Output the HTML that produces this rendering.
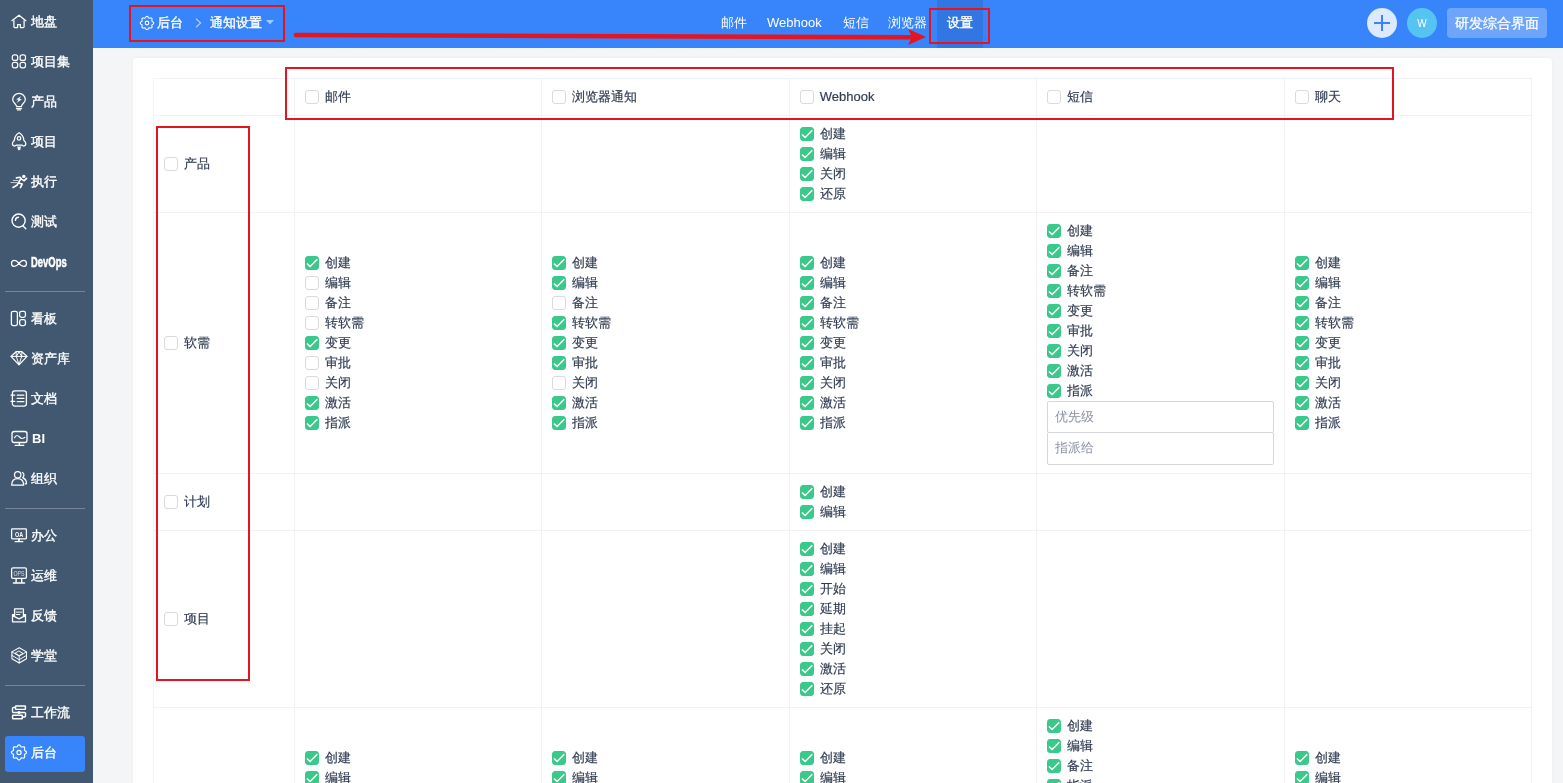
<!DOCTYPE html>
<html lang="zh"><head><meta charset="utf-8"><title>通知设置</title><style>
*{box-sizing:border-box;margin:0;padding:0}
html,body{width:1563px;height:783px;overflow:hidden;background:#f3f5f7;font-family:"Liberation Sans",sans-serif;font-size:13px;color:#313c52}
#side{will-change:transform;position:absolute;left:0;top:0;width:93px;height:783px;background:#425870}
.nv{position:absolute;left:5px;width:80px;height:36px;border-radius:3px;color:#fff;font-weight:700;font-size:13px;line-height:36px;white-space:nowrap}
.nv.act{background:#3784fb}
.nv .ic{position:absolute;left:3px;top:6px;width:22px;height:21px}
.nv .ic svg{display:block}
.nv .lb{position:absolute;left:26px;top:-1px;font-weight:400;-webkit-text-stroke:.35px #fff}
.nv.dev .lb{transform:scaleX(.63);transform-origin:0 50%;font-size:15px;font-weight:700;top:-1px;-webkit-text-stroke:.55px #fff;left:26px}
.dv{position:absolute;left:5px;width:80px;height:1px;background:rgba(255,255,255,.28)}
#head{will-change:transform;position:absolute;left:93px;top:0;width:1470px;height:48px;background:#3784fb;color:#fff}
#head .t{position:absolute;top:0;height:48px;line-height:45px;font-size:13px;white-space:nowrap}
#panel{will-change:transform;position:absolute;left:133px;top:58px;width:1419px;height:800px;background:#fff;border-radius:4px;box-shadow:0 0 4px rgba(0,0,0,.035),0 1px 2px rgba(0,0,0,.03)}
.tb{position:absolute;left:20px;top:20px;width:1379px;border-collapse:collapse;table-layout:fixed}
.tb td,.tb th{border:1px solid #f1f2f5;padding:8px 10px;vertical-align:middle;text-align:left;font-weight:400}
.ln{height:20px;line-height:20px;position:relative;padding-left:20px;white-space:nowrap;font-size:13px}
.ln span{position:relative;top:0;-webkit-text-stroke:.18px #313c52}
.cb{position:absolute;left:0;top:3px;width:14px;height:14px;border:1px solid #d9dadd;border-radius:3px;background:#fff}
.cb.on{background:#3ac98b;border-color:#3ac98b}
.cb svg{position:absolute;left:-1px;top:-1px;width:14px;height:14px}
.inp{height:32px;border:1px solid #d6d7da;border-radius:2px;line-height:30px;padding-left:7px;color:#8b91a2;width:227px;background:#fff;box-shadow:0 0 0 0 transparent}
.inp.i2{margin-top:-1px;height:33px}
.rb{position:absolute;border:2px solid #e51421}

.nv.bi .lb{left:27px;font-weight:700;-webkit-text-stroke:0;font-size:13px}
.md{font-weight:400;-webkit-text-stroke:.35px #fff}

</style></head>
<body>
<div id="side"><div class="nv" style="top:5px"><span class="ic"><svg width="22" height="21" viewBox="0 0 22 21"><path fill="none" stroke="#fff" stroke-width="1.25" stroke-linecap="round" stroke-linejoin="round"  d="M3.9 9.7 L11 4.2 L17.9 9.7"/><path fill="none" stroke="#fff" stroke-width="1.25" stroke-linecap="round" stroke-linejoin="round"  d="M5.9 9.6 V15.6 Q5.9 16.5 6.8 16.5 H9.6 V13.6 H12.4 V16.5 H15.2 Q16.1 16.5 16.1 15.6 V9.6"/></svg></span><span class="lb">地盘</span></div><div class="nv" style="top:45px"><span class="ic"><svg width="22" height="21" viewBox="0 0 22 21"><g fill="none" stroke="#fff" stroke-width="1.2" stroke-linecap="round" stroke-linejoin="round" ><rect x="4.3" y="3.9" width="5.4" height="5.5" rx="2"/><rect x="12.1" y="3.9" width="5.4" height="5.5" rx="2"/><rect x="4.3" y="11.3" width="5.4" height="5.5" rx="2"/><rect x="12.1" y="11.3" width="5.4" height="5.5" rx="2"/></g></svg></span><span class="lb">项目集</span></div><div class="nv" style="top:85px"><span class="ic"><svg width="22" height="21" viewBox="0 0 22 21"><path fill="none" stroke="#fff" stroke-width="1.25" stroke-linecap="round" stroke-linejoin="round"  d="M8.6 15.5 C8.2 12.6 4.7 11.6 4.7 8.7 A6.3 6.3 0 0 1 17.3 8.7 C17.3 11.6 13.8 12.6 13.4 15.5 Z"/><path fill="none" stroke="#fff" stroke-width="1.2" stroke-linecap="round" stroke-linejoin="round"  d="M8.4 17.6 H13.6 M9.5 19 H12.5"/><path fill="#fff" d="M13.1 5.2 L8.1 8.6 L10.6 8.8 L8.5 11.9 L13.9 8.2 L11.4 8.05 Z"/></svg></span><span class="lb">产品</span></div><div class="nv" style="top:125px"><span class="ic"><svg width="22" height="21" viewBox="0 0 22 21"><path fill="none" stroke="#fff" stroke-width="1.25" stroke-linecap="round" stroke-linejoin="round"  d="M11.1 1.7 C8.2 3.4 6.5 6 6.4 9.2 C5 10.4 4.4 11.6 4.4 12.6 C4.4 14.2 5.4 15 6.4 15 C7.2 15 7.6 14.4 8.4 14.1 H13.8 C14.6 14.4 15 15 15.8 15 C16.8 15 17.8 14.2 17.8 12.6 C17.8 11.6 17.2 10.4 15.8 9.2 C15.7 6 14 3.4 11.1 1.7 Z"/><circle fill="none" stroke="#fff" stroke-width="1.3" stroke-linecap="round" stroke-linejoin="round"  cx="11.05" cy="7.4" r="1.75"/><path fill="#fff" fill-opacity=".92" d="M9.1 15.4 H13.1 L12.4 18.2 L11.1 19.5 L9.8 18.2 Z"/></svg></span><span class="lb">项目</span></div><div class="nv" style="top:165px"><span class="ic"><svg width="22" height="21" viewBox="0 0 22 21"><circle cx="15.8" cy="5.4" r="1.7" fill="#fff"/><path fill="none" stroke="#fff" stroke-width="1.6" stroke-linecap="round" stroke-linejoin="round"  d="M8.4 6.9 L12 6.3 L13.5 8.1 L16.2 9.7 L18.6 7.4 M13.1 7.4 L10.4 11.9 L14.2 13.1 L12.4 16.6 M10.4 11.9 L8.9 14.2 L5 16.5"/><path fill="none" stroke="#fff" stroke-width="0.9" stroke-linecap="round" stroke-linejoin="round" stroke-opacity="0.8" d="M5.3 9.4 L10 9.6 M3 11.5 L9.2 11.7"/></svg></span><span class="lb">执行</span></div><div class="nv" style="top:205px"><span class="ic"><svg width="22" height="21" viewBox="0 0 22 21"><circle fill="none" stroke="#fff" stroke-width="1.4" stroke-linecap="round" stroke-linejoin="round"  cx="10.6" cy="9.6" r="6.6"/><path fill="none" stroke="#fff" stroke-width="1.4" stroke-linecap="round" stroke-linejoin="round"  d="M15.1 15 L17.8 17.8"/><path fill="none" stroke="#fff" stroke-width="1.4" stroke-linecap="round" stroke-linejoin="round"  d="M7.4 9.4 A3.3 3.3 0 0 1 10.5 6.2"/></svg></span><span class="lb">测试</span></div><div class="nv dev" style="top:245px"><span class="ic"><svg width="22" height="21" viewBox="0 0 22 21"><path fill="none" stroke="#fff" stroke-width="1.25" stroke-linecap="round" stroke-linejoin="round"  d="M11 12.4 C9.4 10.4 8.2 9.4 6.5 9.4 A3 3 0 0 0 6.5 15.4 C8.2 15.4 9.4 14.4 11 12.4 C12.6 10.4 13.8 9.4 15.5 9.4 A3 3 0 0 1 15.5 15.4 C13.8 15.4 12.6 14.4 11 12.4 Z"/></svg></span><span class="lb">DevOps</span></div><div class="nv" style="top:302px"><span class="ic"><svg width="22" height="21" viewBox="0 0 22 21"><g fill="none" stroke="#fff" stroke-width="1.3" stroke-linecap="round" stroke-linejoin="round" ><rect x="3.4" y="3.3" width="6" height="14.3" rx="1.8"/><rect x="11.65" y="3.3" width="5.8" height="6" rx="1.8"/><rect x="11.65" y="11.6" width="5.8" height="6" rx="1.8"/></g></svg></span><span class="lb">看板</span></div><div class="nv" style="top:342px"><span class="ic"><svg width="22" height="21" viewBox="0 0 22 21"><path fill="none" stroke="#fff" stroke-width="1.25" stroke-linecap="round" stroke-linejoin="round"  d="M8.1 3.7 H13.9 L19 8.4 L11 16.9 L3 8.4 Z"/><path fill="none" stroke="#fff" stroke-width="1.0" stroke-linecap="round" stroke-linejoin="round"  d="M3.2 8.4 H18.8 M8.1 3.8 L8.3 8.4 L11 16.6 L13.7 8.4 L13.9 3.8 M8.3 8.4 L11 4 L13.7 8.4"/></svg></span><span class="lb">资产库</span></div><div class="nv" style="top:382px"><span class="ic"><svg width="22" height="21" viewBox="0 0 22 21"><rect fill="none" stroke="#fff" stroke-width="1.3" stroke-linecap="round" stroke-linejoin="round"  x="4.4" y="2.8" width="14" height="15.3" rx="2.4"/><path fill="none" stroke="#fff" stroke-width="1.2" stroke-linecap="round" stroke-linejoin="round"  d="M3 7.1 H6.8 M3 13.4 H6.8 M9.2 7.1 H15.9 M9.2 10.4 H15.9 M9.2 13.7 H15.9"/></svg></span><span class="lb">文档</span></div><div class="nv bi" style="top:422px"><span class="ic"><svg width="22" height="21" viewBox="0 0 22 21"><rect fill="none" stroke="#fff" stroke-width="1.3" stroke-linecap="round" stroke-linejoin="round"  x="4" y="3.5" width="15" height="11" rx="2.2"/><path fill="none" stroke="#fff" stroke-width="1.2" stroke-linecap="round" stroke-linejoin="round"  d="M6.5 9.7 C7.4 8 8.4 7.5 9.2 7.5 C11 7.5 12 10.5 13.9 10.5 C15 10.5 15.8 10 16.8 9.4"/><path fill="none" stroke="#fff" stroke-width="1.3" stroke-linecap="round" stroke-linejoin="round"  d="M11.4 14.6 V17 M7.2 17.3 H15.8"/></svg></span><span class="lb">BI</span></div><div class="nv" style="top:462px"><span class="ic"><svg width="22" height="21" viewBox="0 0 22 21"><circle fill="none" stroke="#fff" stroke-width="1.25" stroke-linecap="round" stroke-linejoin="round"  cx="9.7" cy="6.7" r="3.2"/><path fill="none" stroke="#fff" stroke-width="1.25" stroke-linecap="round" stroke-linejoin="round"  d="M3.7 17.2 C3.7 13.2 6 10.6 9.7 10.6 C13.4 10.6 15.6 13.2 15.6 17.2 Z"/><path fill="none" stroke="#fff" stroke-width="1.25" stroke-linecap="round" stroke-linejoin="round"  d="M14.5 4.5 A3 3 0 0 1 14.8 9.4 M15 9.9 C17.4 11 18.6 13 18.4 15.8 H17"/></svg></span><span class="lb">组织</span></div><div class="nv" style="top:519px"><span class="ic"><svg width="22" height="21" viewBox="0 0 22 21"><rect fill="none" stroke="#fff" stroke-width="1.3" stroke-linecap="round" stroke-linejoin="round"  x="3.6" y="3.9" width="14.8" height="10" rx="0.8"/><path fill="none" stroke="#fff" stroke-width="1.8" stroke-linecap="round" stroke-linejoin="round"  d="M11 14.4 V16.2"/><path fill="none" stroke="#fff" stroke-width="1.3" stroke-linecap="round" stroke-linejoin="round"  d="M7.2 16.7 H14.8"/><text x="11" y="11.9" font-family="Liberation Sans, sans-serif" font-size="7.4" font-weight="700" fill="#fff" text-anchor="middle" textLength="8.2" lengthAdjust="spacingAndGlyphs">OA</text></svg></span><span class="lb">办公</span></div><div class="nv" style="top:559px"><span class="ic"><svg width="22" height="21" viewBox="0 0 22 21"><rect fill="none" stroke="#fff" stroke-width="1.3" stroke-linecap="round" stroke-linejoin="round"  x="3.6" y="2.8" width="14.8" height="10.6" rx="1.4"/><path fill="none" stroke="#fff" stroke-width="1.4" stroke-linecap="round" stroke-linejoin="round"  d="M8.1 14 V17.6 M13.7 14 V17.6 M5.4 18 H16.6"/><text x="10.9" y="10.9" font-family="Liberation Sans, sans-serif" font-size="7" font-weight="400" fill="#fff" fill-opacity=".8" text-anchor="middle" textLength="11" lengthAdjust="spacingAndGlyphs">OPS</text></svg></span><span class="lb">运维</span></div><div class="nv" style="top:599px"><span class="ic"><svg width="22" height="21" viewBox="0 0 22 21"><path fill="none" stroke="#fff" stroke-width="1.3" stroke-linecap="round" stroke-linejoin="round"  d="M6.6 10.6 V3.9 H15.4 V10.6 M6.4 9.6 H4.5 V16.8 H17.5 V9.6 H15.6 M4.7 10.7 L11 13.9 L17.3 10.7"/><path fill="none" stroke="#fff" stroke-width="1.4" stroke-linecap="round" stroke-linejoin="round" stroke-opacity="0.8" d="M8.3 7.1 H13.7"/><path fill="none" stroke="#fff" stroke-width="1.1" stroke-linecap="round" stroke-linejoin="round"  d="M8.3 9.5 H11.8"/></svg></span><span class="lb">反馈</span></div><div class="nv" style="top:639px"><span class="ic"><svg width="22" height="21" viewBox="0 0 22 21"><path fill="none" stroke="#fff" stroke-width="1.05" stroke-linecap="round" stroke-linejoin="round"  d="M11.2 2.7 L18.5 6.9 V13.8 L11.2 18 L3.9 13.8 V6.9 Z"/><path fill="none" stroke="#fff" stroke-width="0.95" stroke-linecap="round" stroke-linejoin="round"  d="M3.9 6.9 L11.2 11.1 L18.5 6.9 M11.2 11.1 V18 M11.2 6.1 L15 8.4 L11.2 10.6 L7.4 8.4 Z M3.9 10.4 L11.2 14.7 L18.5 10.4"/></svg></span><span class="lb">学堂</span></div><div class="nv" style="top:696px"><span class="ic"><svg width="22" height="21" viewBox="0 0 22 21"><g fill="none" stroke="#fff" stroke-width="1.45" stroke-linecap="round" stroke-linejoin="round" ><rect x="7.5" y="3.95" width="9.9" height="3.4" rx="0.5"/><rect x="4.6" y="13.2" width="9.7" height="3.55" rx="0.5"/><path d="M7.4 5.4 H5.4 Q4.5 5.4 4.5 6.3 V9.5 Q4.5 10.4 5.4 10.4 H16.6 Q17.5 10.4 17.5 11.3 V14 Q17.5 14.9 16.6 14.9 H14.6"/></g><circle cx="11" cy="10.4" r="1.5" fill="#fff"/></svg></span><span class="lb">工作流</span></div><div class="nv act" style="top:736px"><span class="ic"><svg width="22" height="21" viewBox="0 0 22 21"><path fill="none" stroke="#fff" stroke-width="1.2" stroke-linecap="round" stroke-linejoin="round"  d="M11.00 2.85 L11.49 2.97 L11.93 3.31 L12.32 3.78 L12.64 4.27 L12.95 4.66 L13.28 4.90 L13.68 4.97 L14.17 4.90 L14.75 4.79 L15.35 4.73 L15.91 4.80 L16.34 5.06 L16.60 5.49 L16.67 6.05 L16.61 6.65 L16.50 7.22 L16.43 7.72 L16.50 8.12 L16.74 8.45 L17.13 8.76 L17.62 9.08 L18.09 9.47 L18.43 9.91 L18.55 10.40 L18.43 10.89 L18.09 11.33 L17.62 11.72 L17.13 12.04 L16.74 12.35 L16.50 12.68 L16.43 13.08 L16.50 13.57 L16.61 14.15 L16.67 14.75 L16.60 15.31 L16.34 15.74 L15.91 16.00 L15.35 16.07 L14.75 16.01 L14.17 15.90 L13.68 15.83 L13.28 15.90 L12.95 16.14 L12.64 16.53 L12.32 17.02 L11.93 17.49 L11.49 17.83 L11.00 17.95 L10.51 17.83 L10.07 17.49 L9.68 17.02 L9.36 16.53 L9.05 16.14 L8.72 15.90 L8.32 15.83 L7.83 15.90 L7.25 16.01 L6.65 16.07 L6.09 16.00 L5.66 15.74 L5.40 15.31 L5.33 14.75 L5.39 14.15 L5.50 13.58 L5.57 13.08 L5.50 12.68 L5.26 12.35 L4.87 12.04 L4.38 11.72 L3.91 11.33 L3.57 10.89 L3.45 10.40 L3.57 9.91 L3.91 9.47 L4.38 9.08 L4.87 8.76 L5.26 8.45 L5.50 8.12 L5.57 7.72 L5.50 7.22 L5.39 6.65 L5.33 6.05 L5.40 5.49 L5.66 5.06 L6.09 4.80 L6.65 4.73 L7.25 4.79 L7.82 4.90 L8.32 4.97 L8.72 4.90 L9.05 4.66 L9.36 4.27 L9.68 3.78 L10.07 3.31 L10.51 2.97 Z"/><circle fill="none" stroke="#fff" stroke-width="1.2" stroke-linecap="round" stroke-linejoin="round"  cx="11" cy="10.4" r="2.1"/></svg></span><span class="lb">后台</span></div><div class="dv" style="top:291px"></div><div class="dv" style="top:508px"></div><div class="dv" style="top:685px"></div></div>
<div id="head">
  <span style="position:absolute;left:46px;top:15px;line-height:0"><svg width="16" height="16" viewBox="2 1.4 18 18"><path fill="none" stroke="#fff" stroke-width="1.2" stroke-linecap="round" stroke-linejoin="round"  d="M11.00 2.85 L11.49 2.97 L11.93 3.31 L12.32 3.78 L12.64 4.27 L12.95 4.66 L13.28 4.90 L13.68 4.97 L14.17 4.90 L14.75 4.79 L15.35 4.73 L15.91 4.80 L16.34 5.06 L16.60 5.49 L16.67 6.05 L16.61 6.65 L16.50 7.22 L16.43 7.72 L16.50 8.12 L16.74 8.45 L17.13 8.76 L17.62 9.08 L18.09 9.47 L18.43 9.91 L18.55 10.40 L18.43 10.89 L18.09 11.33 L17.62 11.72 L17.13 12.04 L16.74 12.35 L16.50 12.68 L16.43 13.08 L16.50 13.57 L16.61 14.15 L16.67 14.75 L16.60 15.31 L16.34 15.74 L15.91 16.00 L15.35 16.07 L14.75 16.01 L14.17 15.90 L13.68 15.83 L13.28 15.90 L12.95 16.14 L12.64 16.53 L12.32 17.02 L11.93 17.49 L11.49 17.83 L11.00 17.95 L10.51 17.83 L10.07 17.49 L9.68 17.02 L9.36 16.53 L9.05 16.14 L8.72 15.90 L8.32 15.83 L7.83 15.90 L7.25 16.01 L6.65 16.07 L6.09 16.00 L5.66 15.74 L5.40 15.31 L5.33 14.75 L5.39 14.15 L5.50 13.58 L5.57 13.08 L5.50 12.68 L5.26 12.35 L4.87 12.04 L4.38 11.72 L3.91 11.33 L3.57 10.89 L3.45 10.40 L3.57 9.91 L3.91 9.47 L4.38 9.08 L4.87 8.76 L5.26 8.45 L5.50 8.12 L5.57 7.72 L5.50 7.22 L5.39 6.65 L5.33 6.05 L5.40 5.49 L5.66 5.06 L6.09 4.80 L6.65 4.73 L7.25 4.79 L7.82 4.90 L8.32 4.97 L8.72 4.90 L9.05 4.66 L9.36 4.27 L9.68 3.78 L10.07 3.31 L10.51 2.97 Z"/><circle fill="none" stroke="#fff" stroke-width="1.2" stroke-linecap="round" stroke-linejoin="round"  cx="11" cy="10.4" r="2.1"/></svg></span>
  <span class="t md" style="left:64px">后台</span>
  <svg style="position:absolute;left:102px;top:18px" width="7" height="10" viewBox="0 0 7 10"><path d="M1 0.8 L5.6 5 L1 9.2" fill="none" stroke="#fff" stroke-opacity=".6" stroke-width="1.2"/></svg>
  <span class="t md" style="left:117px">通知设置</span>
  <svg style="position:absolute;left:173px;top:20px" width="8" height="5" viewBox="0 0 8 5"><path d="M0 0 H8 L4 4.6 Z" fill="#fff" fill-opacity=".55"/></svg>
  <div style="position:absolute;left:844px;top:0;width:46px;height:48px;background:#3276e3"></div>
  <span class="t" style="left:628px">邮件</span>
  <span class="t" style="left:674px">Webhook</span>
  <span class="t" style="left:750px">短信</span>
  <span class="t" style="left:795px">浏览器</span>
  <span class="t md" style="left:854px">设置</span>
  <div style="position:absolute;left:1274px;top:8px;width:30px;height:30px;border-radius:15px;background:#dce9fe">
    <svg width="30" height="30" viewBox="0 0 30 30"><path d="M15 7 V23 M7 15 H23" stroke="#3784fb" stroke-width="2" fill="none"/></svg>
  </div>
  <div style="position:absolute;left:1314px;top:8px;width:30px;height:30px;border-radius:15px;background:#56c4f1;text-align:center;line-height:31px;font-size:10px;color:#fff">W</div>
  <div style="position:absolute;left:1354px;top:8px;width:100px;height:30px;border-radius:4px;background:rgba(255,255,255,.27);text-align:center;line-height:31px;font-size:14px;color:#fff;-webkit-text-stroke:.25px #fff">研发综合界面</div>
</div>
<div id="panel"><table class="tb"><colgroup><col style="width:141px"><col><col><col><col><col></colgroup><tr class="hd"><th></th><th><div class="ln"><i class="cb"></i><span>邮件</span></div></th><th><div class="ln"><i class="cb"></i><span>浏览器通知</span></div></th><th><div class="ln"><i class="cb"></i><span>Webhook</span></div></th><th><div class="ln"><i class="cb"></i><span>短信</span></div></th><th><div class="ln"><i class="cb"></i><span>聊天</span></div></th></tr><tr><td><div class="ln"><i class="cb"></i><span>产品</span></div></td><td></td><td></td><td><div class="ln"><i class="cb on"><svg viewBox="0 0 14 14"><path d="M1.9 7.5 L5.1 10.4 L12.3 3.3" fill="none" stroke="#fff" stroke-width="1.45"/></svg></i><span>创建</span></div><div class="ln"><i class="cb on"><svg viewBox="0 0 14 14"><path d="M1.9 7.5 L5.1 10.4 L12.3 3.3" fill="none" stroke="#fff" stroke-width="1.45"/></svg></i><span>编辑</span></div><div class="ln"><i class="cb on"><svg viewBox="0 0 14 14"><path d="M1.9 7.5 L5.1 10.4 L12.3 3.3" fill="none" stroke="#fff" stroke-width="1.45"/></svg></i><span>关闭</span></div><div class="ln"><i class="cb on"><svg viewBox="0 0 14 14"><path d="M1.9 7.5 L5.1 10.4 L12.3 3.3" fill="none" stroke="#fff" stroke-width="1.45"/></svg></i><span>还原</span></div></td><td></td><td></td></tr><tr><td><div class="ln"><i class="cb"></i><span>软需</span></div></td><td><div class="ln"><i class="cb on"><svg viewBox="0 0 14 14"><path d="M1.9 7.5 L5.1 10.4 L12.3 3.3" fill="none" stroke="#fff" stroke-width="1.45"/></svg></i><span>创建</span></div><div class="ln"><i class="cb"></i><span>编辑</span></div><div class="ln"><i class="cb"></i><span>备注</span></div><div class="ln"><i class="cb"></i><span>转软需</span></div><div class="ln"><i class="cb on"><svg viewBox="0 0 14 14"><path d="M1.9 7.5 L5.1 10.4 L12.3 3.3" fill="none" stroke="#fff" stroke-width="1.45"/></svg></i><span>变更</span></div><div class="ln"><i class="cb"></i><span>审批</span></div><div class="ln"><i class="cb"></i><span>关闭</span></div><div class="ln"><i class="cb on"><svg viewBox="0 0 14 14"><path d="M1.9 7.5 L5.1 10.4 L12.3 3.3" fill="none" stroke="#fff" stroke-width="1.45"/></svg></i><span>激活</span></div><div class="ln"><i class="cb on"><svg viewBox="0 0 14 14"><path d="M1.9 7.5 L5.1 10.4 L12.3 3.3" fill="none" stroke="#fff" stroke-width="1.45"/></svg></i><span>指派</span></div></td><td><div class="ln"><i class="cb on"><svg viewBox="0 0 14 14"><path d="M1.9 7.5 L5.1 10.4 L12.3 3.3" fill="none" stroke="#fff" stroke-width="1.45"/></svg></i><span>创建</span></div><div class="ln"><i class="cb on"><svg viewBox="0 0 14 14"><path d="M1.9 7.5 L5.1 10.4 L12.3 3.3" fill="none" stroke="#fff" stroke-width="1.45"/></svg></i><span>编辑</span></div><div class="ln"><i class="cb"></i><span>备注</span></div><div class="ln"><i class="cb on"><svg viewBox="0 0 14 14"><path d="M1.9 7.5 L5.1 10.4 L12.3 3.3" fill="none" stroke="#fff" stroke-width="1.45"/></svg></i><span>转软需</span></div><div class="ln"><i class="cb on"><svg viewBox="0 0 14 14"><path d="M1.9 7.5 L5.1 10.4 L12.3 3.3" fill="none" stroke="#fff" stroke-width="1.45"/></svg></i><span>变更</span></div><div class="ln"><i class="cb on"><svg viewBox="0 0 14 14"><path d="M1.9 7.5 L5.1 10.4 L12.3 3.3" fill="none" stroke="#fff" stroke-width="1.45"/></svg></i><span>审批</span></div><div class="ln"><i class="cb"></i><span>关闭</span></div><div class="ln"><i class="cb on"><svg viewBox="0 0 14 14"><path d="M1.9 7.5 L5.1 10.4 L12.3 3.3" fill="none" stroke="#fff" stroke-width="1.45"/></svg></i><span>激活</span></div><div class="ln"><i class="cb on"><svg viewBox="0 0 14 14"><path d="M1.9 7.5 L5.1 10.4 L12.3 3.3" fill="none" stroke="#fff" stroke-width="1.45"/></svg></i><span>指派</span></div></td><td><div class="ln"><i class="cb on"><svg viewBox="0 0 14 14"><path d="M1.9 7.5 L5.1 10.4 L12.3 3.3" fill="none" stroke="#fff" stroke-width="1.45"/></svg></i><span>创建</span></div><div class="ln"><i class="cb on"><svg viewBox="0 0 14 14"><path d="M1.9 7.5 L5.1 10.4 L12.3 3.3" fill="none" stroke="#fff" stroke-width="1.45"/></svg></i><span>编辑</span></div><div class="ln"><i class="cb on"><svg viewBox="0 0 14 14"><path d="M1.9 7.5 L5.1 10.4 L12.3 3.3" fill="none" stroke="#fff" stroke-width="1.45"/></svg></i><span>备注</span></div><div class="ln"><i class="cb on"><svg viewBox="0 0 14 14"><path d="M1.9 7.5 L5.1 10.4 L12.3 3.3" fill="none" stroke="#fff" stroke-width="1.45"/></svg></i><span>转软需</span></div><div class="ln"><i class="cb on"><svg viewBox="0 0 14 14"><path d="M1.9 7.5 L5.1 10.4 L12.3 3.3" fill="none" stroke="#fff" stroke-width="1.45"/></svg></i><span>变更</span></div><div class="ln"><i class="cb on"><svg viewBox="0 0 14 14"><path d="M1.9 7.5 L5.1 10.4 L12.3 3.3" fill="none" stroke="#fff" stroke-width="1.45"/></svg></i><span>审批</span></div><div class="ln"><i class="cb on"><svg viewBox="0 0 14 14"><path d="M1.9 7.5 L5.1 10.4 L12.3 3.3" fill="none" stroke="#fff" stroke-width="1.45"/></svg></i><span>关闭</span></div><div class="ln"><i class="cb on"><svg viewBox="0 0 14 14"><path d="M1.9 7.5 L5.1 10.4 L12.3 3.3" fill="none" stroke="#fff" stroke-width="1.45"/></svg></i><span>激活</span></div><div class="ln"><i class="cb on"><svg viewBox="0 0 14 14"><path d="M1.9 7.5 L5.1 10.4 L12.3 3.3" fill="none" stroke="#fff" stroke-width="1.45"/></svg></i><span>指派</span></div></td><td><div class="ln"><i class="cb on"><svg viewBox="0 0 14 14"><path d="M1.9 7.5 L5.1 10.4 L12.3 3.3" fill="none" stroke="#fff" stroke-width="1.45"/></svg></i><span>创建</span></div><div class="ln"><i class="cb on"><svg viewBox="0 0 14 14"><path d="M1.9 7.5 L5.1 10.4 L12.3 3.3" fill="none" stroke="#fff" stroke-width="1.45"/></svg></i><span>编辑</span></div><div class="ln"><i class="cb on"><svg viewBox="0 0 14 14"><path d="M1.9 7.5 L5.1 10.4 L12.3 3.3" fill="none" stroke="#fff" stroke-width="1.45"/></svg></i><span>备注</span></div><div class="ln"><i class="cb on"><svg viewBox="0 0 14 14"><path d="M1.9 7.5 L5.1 10.4 L12.3 3.3" fill="none" stroke="#fff" stroke-width="1.45"/></svg></i><span>转软需</span></div><div class="ln"><i class="cb on"><svg viewBox="0 0 14 14"><path d="M1.9 7.5 L5.1 10.4 L12.3 3.3" fill="none" stroke="#fff" stroke-width="1.45"/></svg></i><span>变更</span></div><div class="ln"><i class="cb on"><svg viewBox="0 0 14 14"><path d="M1.9 7.5 L5.1 10.4 L12.3 3.3" fill="none" stroke="#fff" stroke-width="1.45"/></svg></i><span>审批</span></div><div class="ln"><i class="cb on"><svg viewBox="0 0 14 14"><path d="M1.9 7.5 L5.1 10.4 L12.3 3.3" fill="none" stroke="#fff" stroke-width="1.45"/></svg></i><span>关闭</span></div><div class="ln"><i class="cb on"><svg viewBox="0 0 14 14"><path d="M1.9 7.5 L5.1 10.4 L12.3 3.3" fill="none" stroke="#fff" stroke-width="1.45"/></svg></i><span>激活</span></div><div class="ln"><i class="cb on"><svg viewBox="0 0 14 14"><path d="M1.9 7.5 L5.1 10.4 L12.3 3.3" fill="none" stroke="#fff" stroke-width="1.45"/></svg></i><span>指派</span></div><div class="inp">优先级</div><div class="inp i2">指派给</div></td><td><div class="ln"><i class="cb on"><svg viewBox="0 0 14 14"><path d="M1.9 7.5 L5.1 10.4 L12.3 3.3" fill="none" stroke="#fff" stroke-width="1.45"/></svg></i><span>创建</span></div><div class="ln"><i class="cb on"><svg viewBox="0 0 14 14"><path d="M1.9 7.5 L5.1 10.4 L12.3 3.3" fill="none" stroke="#fff" stroke-width="1.45"/></svg></i><span>编辑</span></div><div class="ln"><i class="cb on"><svg viewBox="0 0 14 14"><path d="M1.9 7.5 L5.1 10.4 L12.3 3.3" fill="none" stroke="#fff" stroke-width="1.45"/></svg></i><span>备注</span></div><div class="ln"><i class="cb on"><svg viewBox="0 0 14 14"><path d="M1.9 7.5 L5.1 10.4 L12.3 3.3" fill="none" stroke="#fff" stroke-width="1.45"/></svg></i><span>转软需</span></div><div class="ln"><i class="cb on"><svg viewBox="0 0 14 14"><path d="M1.9 7.5 L5.1 10.4 L12.3 3.3" fill="none" stroke="#fff" stroke-width="1.45"/></svg></i><span>变更</span></div><div class="ln"><i class="cb on"><svg viewBox="0 0 14 14"><path d="M1.9 7.5 L5.1 10.4 L12.3 3.3" fill="none" stroke="#fff" stroke-width="1.45"/></svg></i><span>审批</span></div><div class="ln"><i class="cb on"><svg viewBox="0 0 14 14"><path d="M1.9 7.5 L5.1 10.4 L12.3 3.3" fill="none" stroke="#fff" stroke-width="1.45"/></svg></i><span>关闭</span></div><div class="ln"><i class="cb on"><svg viewBox="0 0 14 14"><path d="M1.9 7.5 L5.1 10.4 L12.3 3.3" fill="none" stroke="#fff" stroke-width="1.45"/></svg></i><span>激活</span></div><div class="ln"><i class="cb on"><svg viewBox="0 0 14 14"><path d="M1.9 7.5 L5.1 10.4 L12.3 3.3" fill="none" stroke="#fff" stroke-width="1.45"/></svg></i><span>指派</span></div></td></tr><tr><td><div class="ln"><i class="cb"></i><span>计划</span></div></td><td></td><td></td><td><div class="ln"><i class="cb on"><svg viewBox="0 0 14 14"><path d="M1.9 7.5 L5.1 10.4 L12.3 3.3" fill="none" stroke="#fff" stroke-width="1.45"/></svg></i><span>创建</span></div><div class="ln"><i class="cb on"><svg viewBox="0 0 14 14"><path d="M1.9 7.5 L5.1 10.4 L12.3 3.3" fill="none" stroke="#fff" stroke-width="1.45"/></svg></i><span>编辑</span></div></td><td></td><td></td></tr><tr><td><div class="ln"><i class="cb"></i><span>项目</span></div></td><td></td><td></td><td><div class="ln"><i class="cb on"><svg viewBox="0 0 14 14"><path d="M1.9 7.5 L5.1 10.4 L12.3 3.3" fill="none" stroke="#fff" stroke-width="1.45"/></svg></i><span>创建</span></div><div class="ln"><i class="cb on"><svg viewBox="0 0 14 14"><path d="M1.9 7.5 L5.1 10.4 L12.3 3.3" fill="none" stroke="#fff" stroke-width="1.45"/></svg></i><span>编辑</span></div><div class="ln"><i class="cb on"><svg viewBox="0 0 14 14"><path d="M1.9 7.5 L5.1 10.4 L12.3 3.3" fill="none" stroke="#fff" stroke-width="1.45"/></svg></i><span>开始</span></div><div class="ln"><i class="cb on"><svg viewBox="0 0 14 14"><path d="M1.9 7.5 L5.1 10.4 L12.3 3.3" fill="none" stroke="#fff" stroke-width="1.45"/></svg></i><span>延期</span></div><div class="ln"><i class="cb on"><svg viewBox="0 0 14 14"><path d="M1.9 7.5 L5.1 10.4 L12.3 3.3" fill="none" stroke="#fff" stroke-width="1.45"/></svg></i><span>挂起</span></div><div class="ln"><i class="cb on"><svg viewBox="0 0 14 14"><path d="M1.9 7.5 L5.1 10.4 L12.3 3.3" fill="none" stroke="#fff" stroke-width="1.45"/></svg></i><span>关闭</span></div><div class="ln"><i class="cb on"><svg viewBox="0 0 14 14"><path d="M1.9 7.5 L5.1 10.4 L12.3 3.3" fill="none" stroke="#fff" stroke-width="1.45"/></svg></i><span>激活</span></div><div class="ln"><i class="cb on"><svg viewBox="0 0 14 14"><path d="M1.9 7.5 L5.1 10.4 L12.3 3.3" fill="none" stroke="#fff" stroke-width="1.45"/></svg></i><span>还原</span></div></td><td></td><td></td></tr><tr><td><div class="ln"><i class="cb"></i><span>任务</span></div></td><td><div class="ln"><i class="cb on"><svg viewBox="0 0 14 14"><path d="M1.9 7.5 L5.1 10.4 L12.3 3.3" fill="none" stroke="#fff" stroke-width="1.45"/></svg></i><span>创建</span></div><div class="ln"><i class="cb on"><svg viewBox="0 0 14 14"><path d="M1.9 7.5 L5.1 10.4 L12.3 3.3" fill="none" stroke="#fff" stroke-width="1.45"/></svg></i><span>编辑</span></div><div class="ln"><i class="cb on"><svg viewBox="0 0 14 14"><path d="M1.9 7.5 L5.1 10.4 L12.3 3.3" fill="none" stroke="#fff" stroke-width="1.45"/></svg></i><span>备注</span></div><div class="ln"><i class="cb on"><svg viewBox="0 0 14 14"><path d="M1.9 7.5 L5.1 10.4 L12.3 3.3" fill="none" stroke="#fff" stroke-width="1.45"/></svg></i><span>指派</span></div><div class="ln"><i class="cb on"><svg viewBox="0 0 14 14"><path d="M1.9 7.5 L5.1 10.4 L12.3 3.3" fill="none" stroke="#fff" stroke-width="1.45"/></svg></i><span>开始</span></div><div class="ln"><i class="cb on"><svg viewBox="0 0 14 14"><path d="M1.9 7.5 L5.1 10.4 L12.3 3.3" fill="none" stroke="#fff" stroke-width="1.45"/></svg></i><span>完成</span></div><div class="ln"><i class="cb on"><svg viewBox="0 0 14 14"><path d="M1.9 7.5 L5.1 10.4 L12.3 3.3" fill="none" stroke="#fff" stroke-width="1.45"/></svg></i><span>暂停</span></div><div class="ln"><i class="cb on"><svg viewBox="0 0 14 14"><path d="M1.9 7.5 L5.1 10.4 L12.3 3.3" fill="none" stroke="#fff" stroke-width="1.45"/></svg></i><span>取消</span></div><div class="ln"><i class="cb on"><svg viewBox="0 0 14 14"><path d="M1.9 7.5 L5.1 10.4 L12.3 3.3" fill="none" stroke="#fff" stroke-width="1.45"/></svg></i><span>关闭</span></div></td><td><div class="ln"><i class="cb on"><svg viewBox="0 0 14 14"><path d="M1.9 7.5 L5.1 10.4 L12.3 3.3" fill="none" stroke="#fff" stroke-width="1.45"/></svg></i><span>创建</span></div><div class="ln"><i class="cb on"><svg viewBox="0 0 14 14"><path d="M1.9 7.5 L5.1 10.4 L12.3 3.3" fill="none" stroke="#fff" stroke-width="1.45"/></svg></i><span>编辑</span></div><div class="ln"><i class="cb on"><svg viewBox="0 0 14 14"><path d="M1.9 7.5 L5.1 10.4 L12.3 3.3" fill="none" stroke="#fff" stroke-width="1.45"/></svg></i><span>备注</span></div><div class="ln"><i class="cb on"><svg viewBox="0 0 14 14"><path d="M1.9 7.5 L5.1 10.4 L12.3 3.3" fill="none" stroke="#fff" stroke-width="1.45"/></svg></i><span>指派</span></div><div class="ln"><i class="cb on"><svg viewBox="0 0 14 14"><path d="M1.9 7.5 L5.1 10.4 L12.3 3.3" fill="none" stroke="#fff" stroke-width="1.45"/></svg></i><span>开始</span></div><div class="ln"><i class="cb on"><svg viewBox="0 0 14 14"><path d="M1.9 7.5 L5.1 10.4 L12.3 3.3" fill="none" stroke="#fff" stroke-width="1.45"/></svg></i><span>完成</span></div><div class="ln"><i class="cb on"><svg viewBox="0 0 14 14"><path d="M1.9 7.5 L5.1 10.4 L12.3 3.3" fill="none" stroke="#fff" stroke-width="1.45"/></svg></i><span>暂停</span></div><div class="ln"><i class="cb on"><svg viewBox="0 0 14 14"><path d="M1.9 7.5 L5.1 10.4 L12.3 3.3" fill="none" stroke="#fff" stroke-width="1.45"/></svg></i><span>取消</span></div><div class="ln"><i class="cb on"><svg viewBox="0 0 14 14"><path d="M1.9 7.5 L5.1 10.4 L12.3 3.3" fill="none" stroke="#fff" stroke-width="1.45"/></svg></i><span>关闭</span></div></td><td><div class="ln"><i class="cb on"><svg viewBox="0 0 14 14"><path d="M1.9 7.5 L5.1 10.4 L12.3 3.3" fill="none" stroke="#fff" stroke-width="1.45"/></svg></i><span>创建</span></div><div class="ln"><i class="cb on"><svg viewBox="0 0 14 14"><path d="M1.9 7.5 L5.1 10.4 L12.3 3.3" fill="none" stroke="#fff" stroke-width="1.45"/></svg></i><span>编辑</span></div><div class="ln"><i class="cb on"><svg viewBox="0 0 14 14"><path d="M1.9 7.5 L5.1 10.4 L12.3 3.3" fill="none" stroke="#fff" stroke-width="1.45"/></svg></i><span>备注</span></div><div class="ln"><i class="cb on"><svg viewBox="0 0 14 14"><path d="M1.9 7.5 L5.1 10.4 L12.3 3.3" fill="none" stroke="#fff" stroke-width="1.45"/></svg></i><span>指派</span></div><div class="ln"><i class="cb on"><svg viewBox="0 0 14 14"><path d="M1.9 7.5 L5.1 10.4 L12.3 3.3" fill="none" stroke="#fff" stroke-width="1.45"/></svg></i><span>开始</span></div><div class="ln"><i class="cb on"><svg viewBox="0 0 14 14"><path d="M1.9 7.5 L5.1 10.4 L12.3 3.3" fill="none" stroke="#fff" stroke-width="1.45"/></svg></i><span>完成</span></div><div class="ln"><i class="cb on"><svg viewBox="0 0 14 14"><path d="M1.9 7.5 L5.1 10.4 L12.3 3.3" fill="none" stroke="#fff" stroke-width="1.45"/></svg></i><span>暂停</span></div><div class="ln"><i class="cb on"><svg viewBox="0 0 14 14"><path d="M1.9 7.5 L5.1 10.4 L12.3 3.3" fill="none" stroke="#fff" stroke-width="1.45"/></svg></i><span>取消</span></div><div class="ln"><i class="cb on"><svg viewBox="0 0 14 14"><path d="M1.9 7.5 L5.1 10.4 L12.3 3.3" fill="none" stroke="#fff" stroke-width="1.45"/></svg></i><span>关闭</span></div></td><td><div class="ln"><i class="cb on"><svg viewBox="0 0 14 14"><path d="M1.9 7.5 L5.1 10.4 L12.3 3.3" fill="none" stroke="#fff" stroke-width="1.45"/></svg></i><span>创建</span></div><div class="ln"><i class="cb on"><svg viewBox="0 0 14 14"><path d="M1.9 7.5 L5.1 10.4 L12.3 3.3" fill="none" stroke="#fff" stroke-width="1.45"/></svg></i><span>编辑</span></div><div class="ln"><i class="cb on"><svg viewBox="0 0 14 14"><path d="M1.9 7.5 L5.1 10.4 L12.3 3.3" fill="none" stroke="#fff" stroke-width="1.45"/></svg></i><span>备注</span></div><div class="ln"><i class="cb on"><svg viewBox="0 0 14 14"><path d="M1.9 7.5 L5.1 10.4 L12.3 3.3" fill="none" stroke="#fff" stroke-width="1.45"/></svg></i><span>指派</span></div><div class="ln"><i class="cb on"><svg viewBox="0 0 14 14"><path d="M1.9 7.5 L5.1 10.4 L12.3 3.3" fill="none" stroke="#fff" stroke-width="1.45"/></svg></i><span>开始</span></div><div class="ln"><i class="cb on"><svg viewBox="0 0 14 14"><path d="M1.9 7.5 L5.1 10.4 L12.3 3.3" fill="none" stroke="#fff" stroke-width="1.45"/></svg></i><span>完成</span></div><div class="ln"><i class="cb on"><svg viewBox="0 0 14 14"><path d="M1.9 7.5 L5.1 10.4 L12.3 3.3" fill="none" stroke="#fff" stroke-width="1.45"/></svg></i><span>暂停</span></div><div class="ln"><i class="cb on"><svg viewBox="0 0 14 14"><path d="M1.9 7.5 L5.1 10.4 L12.3 3.3" fill="none" stroke="#fff" stroke-width="1.45"/></svg></i><span>取消</span></div><div class="ln"><i class="cb on"><svg viewBox="0 0 14 14"><path d="M1.9 7.5 L5.1 10.4 L12.3 3.3" fill="none" stroke="#fff" stroke-width="1.45"/></svg></i><span>关闭</span></div><div class="inp">优先级</div><div class="inp i2">指派给</div></td><td><div class="ln"><i class="cb on"><svg viewBox="0 0 14 14"><path d="M1.9 7.5 L5.1 10.4 L12.3 3.3" fill="none" stroke="#fff" stroke-width="1.45"/></svg></i><span>创建</span></div><div class="ln"><i class="cb on"><svg viewBox="0 0 14 14"><path d="M1.9 7.5 L5.1 10.4 L12.3 3.3" fill="none" stroke="#fff" stroke-width="1.45"/></svg></i><span>编辑</span></div><div class="ln"><i class="cb on"><svg viewBox="0 0 14 14"><path d="M1.9 7.5 L5.1 10.4 L12.3 3.3" fill="none" stroke="#fff" stroke-width="1.45"/></svg></i><span>备注</span></div><div class="ln"><i class="cb on"><svg viewBox="0 0 14 14"><path d="M1.9 7.5 L5.1 10.4 L12.3 3.3" fill="none" stroke="#fff" stroke-width="1.45"/></svg></i><span>指派</span></div><div class="ln"><i class="cb on"><svg viewBox="0 0 14 14"><path d="M1.9 7.5 L5.1 10.4 L12.3 3.3" fill="none" stroke="#fff" stroke-width="1.45"/></svg></i><span>开始</span></div><div class="ln"><i class="cb on"><svg viewBox="0 0 14 14"><path d="M1.9 7.5 L5.1 10.4 L12.3 3.3" fill="none" stroke="#fff" stroke-width="1.45"/></svg></i><span>完成</span></div><div class="ln"><i class="cb on"><svg viewBox="0 0 14 14"><path d="M1.9 7.5 L5.1 10.4 L12.3 3.3" fill="none" stroke="#fff" stroke-width="1.45"/></svg></i><span>暂停</span></div><div class="ln"><i class="cb on"><svg viewBox="0 0 14 14"><path d="M1.9 7.5 L5.1 10.4 L12.3 3.3" fill="none" stroke="#fff" stroke-width="1.45"/></svg></i><span>取消</span></div><div class="ln"><i class="cb on"><svg viewBox="0 0 14 14"><path d="M1.9 7.5 L5.1 10.4 L12.3 3.3" fill="none" stroke="#fff" stroke-width="1.45"/></svg></i><span>关闭</span></div></td></tr></table></div>
<!-- annotation marks -->
<div class="rb" style="left:129px;top:5px;width:156px;height:37px"></div>
<div class="rb" style="left:929px;top:8px;width:61px;height:36px"></div>
<div class="rb" style="left:285px;top:67px;width:1109px;height:53px"></div>
<div class="rb" style="left:156px;top:126px;width:94px;height:555px"></div>
<svg style="position:absolute;left:0;top:0" width="1563" height="60" viewBox="0 0 1563 60"><path d="M296 35 L912 37.2" stroke="#e51421" stroke-width="4.6" stroke-linecap="round" fill="none"/><path d="M908 29 L926 37 L908 45 L912 37 Z" fill="#e51421"/></svg>

</body></html>
